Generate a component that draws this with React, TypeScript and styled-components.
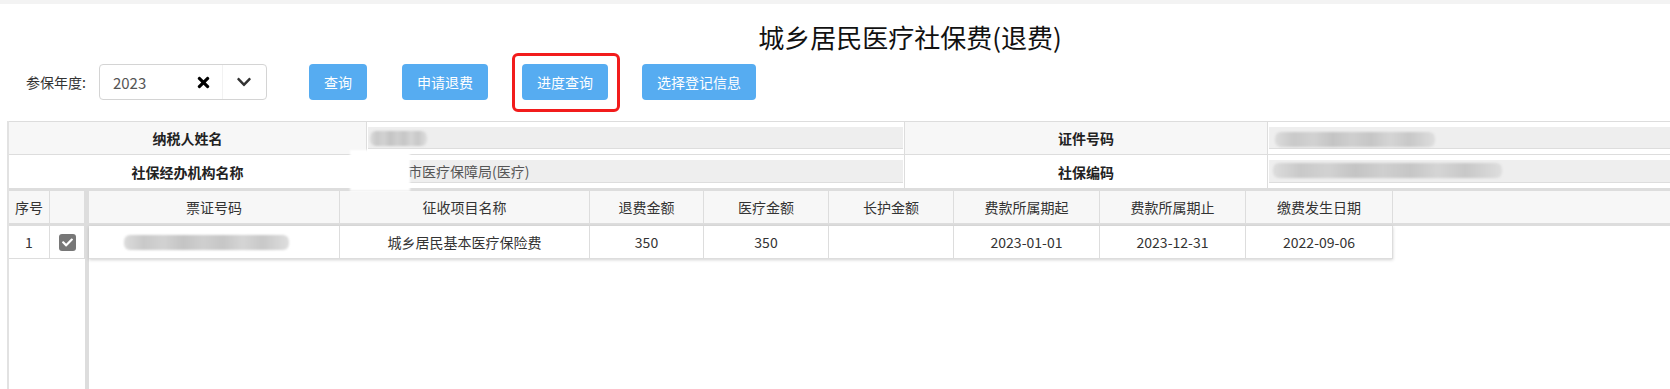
import React from "react";
import styled, { createGlobalStyle } from "styled-components";
import { FaTimes, FaChevronDown, FaCheck } from "react-icons/fa";

const GlobalStyle = createGlobalStyle`
  html, body { margin: 0; padding: 0; background: #fff; }
  body {
    font-family: "Noto Sans CJK SC", "Noto Sans", sans-serif;
    font-size: 14px;
    color: #333;
    overflow: hidden;
  }
`;

const columns = [
  { title: "票证号码", width: 251 },
  { title: "征收项目名称", width: 250 },
  { title: "退费金额", width: 114 },
  { title: "医疗金额", width: 125 },
  { title: "长护金额", width: 125 },
  { title: "费款所属期起", width: 146 },
  { title: "费款所属期止", width: 146 },
  { title: "缴费发生日期", width: 147 },
];

const row = ["", "城乡居民基本医疗保险费", "350", "350", "", "2023-01-01", "2023-12-31", "2022-09-06"];

function App() {
  return (
    <Page>
      <GlobalStyle />
      <TopStrip />
      <TitleBar>
        <h1>城乡居民医疗社保费(退费)</h1>
      </TitleBar>
      <Toolbar>
        <Label>参保年度:</Label>
        <Select>
          <span className="value">2023</span>
          <span className="clear">
            <FaTimes />
          </span>
          <span className="arrow">
            <FaChevronDown />
          </span>
        </Select>
        <Button $ml={42}>查询</Button>
        <Button $ml={35}>申请退费</Button>
        <Marked $ml={34}>
          <Button>进度查询</Button>
        </Marked>
        <Button $ml={34}>选择登记信息</Button>
      </Toolbar>

      <Table>
        <InfoGrid>
          <InfoLabel $alt>纳税人姓名</InfoLabel>
          <InfoValue>
            <Field />
            <Redact $x={3} $y={9} $w={57} $h={15} />
          </InfoValue>
          <InfoLabel $alt>证件号码</InfoLabel>
          <InfoValue $last>
            <Field />
            <Redact $x={7} $y={10} $w={160} $h={15} />
          </InfoValue>

          <InfoLabel>社保经办机构名称</InfoLabel>
          <InfoValue>
            <Field>市医疗保障局(医疗)</Field>
            <WhitePatch />
          </InfoValue>
          <InfoLabel>社保编码</InfoLabel>
          <InfoValue $last>
            <Field />
            <Redact $x={5} $y={8} $w={229} $h={15} />
          </InfoValue>
        </InfoGrid>

        <GridBody>
          <Frozen>
            <HeadRow>
              <Cell $w={41}>序号</Cell>
              <Cell $w={35} />
            </HeadRow>
            <DataRow>
              <Cell $w={41}>1</Cell>
              <Cell $w={35}>
                <Check>
                  <FaCheck />
                </Check>
              </Cell>
            </DataRow>
          </Frozen>
          <Main>
            <HeadRow>
              {columns.map((c) => (
                <Cell key={c.title} $w={c.width}>
                  {c.title}
                </Cell>
              ))}
              <Filler />
            </HeadRow>
            <DataRow $shadow>
              {columns.map((c, i) => (
                <Cell key={c.title} $w={c.width}>
                  {i === 0 ? <Redact $x={35} $y={9} $w={165} $h={15} /> : row[i]}
                </Cell>
              ))}
            </DataRow>
          </Main>
        </GridBody>
      </Table>
    </Page>
  );
}

export default App;

const Page = styled.div`
  width: 1670px;
  height: 389px;
  overflow: hidden;
`;

const TopStrip = styled.div`
  height: 4px;
  background: #f3f3f3;
`;

const TitleBar = styled.div`
  height: 60px;
  box-sizing: border-box;
  padding: 6px 0 0 150px;
  display: flex;
  align-items: center;
  justify-content: center;

  h1 {
    margin: 0;
    font-size: 26px;
    font-weight: 400;
    color: #111;
    line-height: 30px;
  }
`;

const Toolbar = styled.div`
  height: 36px;
  display: flex;
  align-items: center;
  padding-left: 26px;
`;

const Label = styled.span`
  font-size: 14px;
  color: #333;
  margin-right: 13px;
`;

const Select = styled.div`
  width: 168px;
  height: 36px;
  box-sizing: border-box;
  border: 1px solid #d4d4d4;
  border-radius: 4px;
  display: flex;
  align-items: center;
  background: #fff;

  .value {
    flex: 1;
    padding-left: 13px;
    font-size: 15px;
    color: #555;
  }
  .clear {
    width: 24px;
    display: flex;
    justify-content: center;
    font-size: 17px;
    color: #000;
    margin-right: 6px;
  }
  .arrow {
    width: 43px;
    height: 34px;
    border-left: 1px solid #f2f2f2;
    display: flex;
    align-items: center;
    justify-content: center;
    font-size: 16px;
    color: #333;
  }
`;

const Button = styled.button<{ $ml?: number }>`
  margin-left: ${(p) => p.$ml ?? 0}px;
  height: 36px;
  padding: 0 15px;
  border: none;
  border-radius: 4px;
  background: #56acf1;
  color: #fff;
  font-family: inherit;
  font-size: 14px;
  cursor: pointer;
`;

const Marked = styled.span<{ $ml?: number }>`
  position: relative;
  display: inline-flex;
  margin-left: ${(p) => p.$ml ?? 0}px;

  &::after {
    content: "";
    position: absolute;
    inset: -11px -12px -12px -10px;
    border: 3px solid #f21c1c;
    border-radius: 6px;
    pointer-events: none;
  }
`;

const Table = styled.div`
  margin: 21px 0 0 7px;
  border-left: 2px solid #e2e2e2;
`;

const InfoGrid = styled.div`
  display: grid;
  grid-template-columns: 358px 538px 363px 1fr;
  grid-auto-rows: 33px;
  border-top: 1px solid #ddd;
  border-bottom: 3px solid #ddd;
`;

const InfoLabel = styled.div<{ $alt?: boolean }>`
  box-sizing: border-box;
  display: flex;
  align-items: center;
  justify-content: center;
  font-weight: 700;
  font-size: 14px;
  color: #222;
  background: ${(p) => (p.$alt ? "#f7f7f7" : "#fff")};
  border-right: 1px solid #ddd;
  border-bottom: 1px solid #ddd;
  &:nth-last-child(-n + 4) {
    border-bottom: none;
  }
`;

const InfoValue = styled.div<{ $last?: boolean }>`
  position: relative;
  box-sizing: border-box;
  padding: 5px ${(p) => (p.$last ? 0 : 1)}px 5px 1px;
  border-right: ${(p) => (p.$last ? "none" : "1px solid #ddd")};
  border-bottom: 1px solid #ddd;
  &:nth-last-child(-n + 3) {
    border-bottom: none;
  }
`;

const Field = styled.div`
  height: 100%;
  box-sizing: border-box;
  background: #eee;
  border-bottom: 1px solid #ddd;
  padding-left: 40px;
  display: flex;
  align-items: center;
  font-size: 14px;
  color: #555;
`;

const Redact = styled.span<{ $x: number; $y: number; $w: number; $h: number }>`
  position: absolute;
  left: ${(p) => p.$x}px;
  top: ${(p) => p.$y}px;
  width: ${(p) => p.$w}px;
  height: ${(p) => p.$h}px;
  background: linear-gradient(
    90deg,
    #dcdcdc 0%,
    #c9c9c9 12%,
    #d2d2d2 24%,
    #c4c4c4 36%,
    #cfcfcf 48%,
    #c6c6c6 60%,
    #d5d5d5 72%,
    #c8c8c8 84%,
    #dedede 100%
  );
  filter: blur(1px);
  border-radius: 6px;
`;

const WhitePatch = styled.span`
  position: absolute;
  left: -17px;
  top: -5px;
  width: 60px;
  height: 41px;
  background: #fff;
  filter: blur(1px);
`;

const GridBody = styled.div`
  display: flex;
  height: 200px;
`;

const Frozen = styled.div`
  width: 76px;
  border-right: 4px solid #ddd;
  display: flex;
  flex-direction: column;
`;

const Main = styled.div`
  flex: 1;
  display: flex;
  flex-direction: column;
`;

const HeadRow = styled.div`
  display: flex;
  height: 32px;
  background: #f7f7f7;
  border-bottom: 3px solid #ddd;
`;

const DataRow = styled.div<{ $shadow?: boolean }>`
  display: flex;
  height: 32px;
  width: fit-content;
  background: #fff;
  border-bottom: 1px solid #ddd;
  box-shadow: ${(p) => (p.$shadow ? "0 1px 3px rgba(0,0,0,0.18)" : "none")};
`;

const Cell = styled.div<{ $w: number }>`
  position: relative;
  width: ${(p) => p.$w}px;
  flex: none;
  box-sizing: border-box;
  border-right: 1px solid #ddd;
  display: flex;
  align-items: center;
  justify-content: center;
  font-size: 14px;
  color: #333;
`;

const Filler = styled.div`
  flex: 1;
`;

const Check = styled.span`
  width: 17px;
  height: 17px;
  border-radius: 3px;
  background: #777;
  color: #fff;
  display: flex;
  align-items: center;
  justify-content: center;
  font-size: 11px;
`;
